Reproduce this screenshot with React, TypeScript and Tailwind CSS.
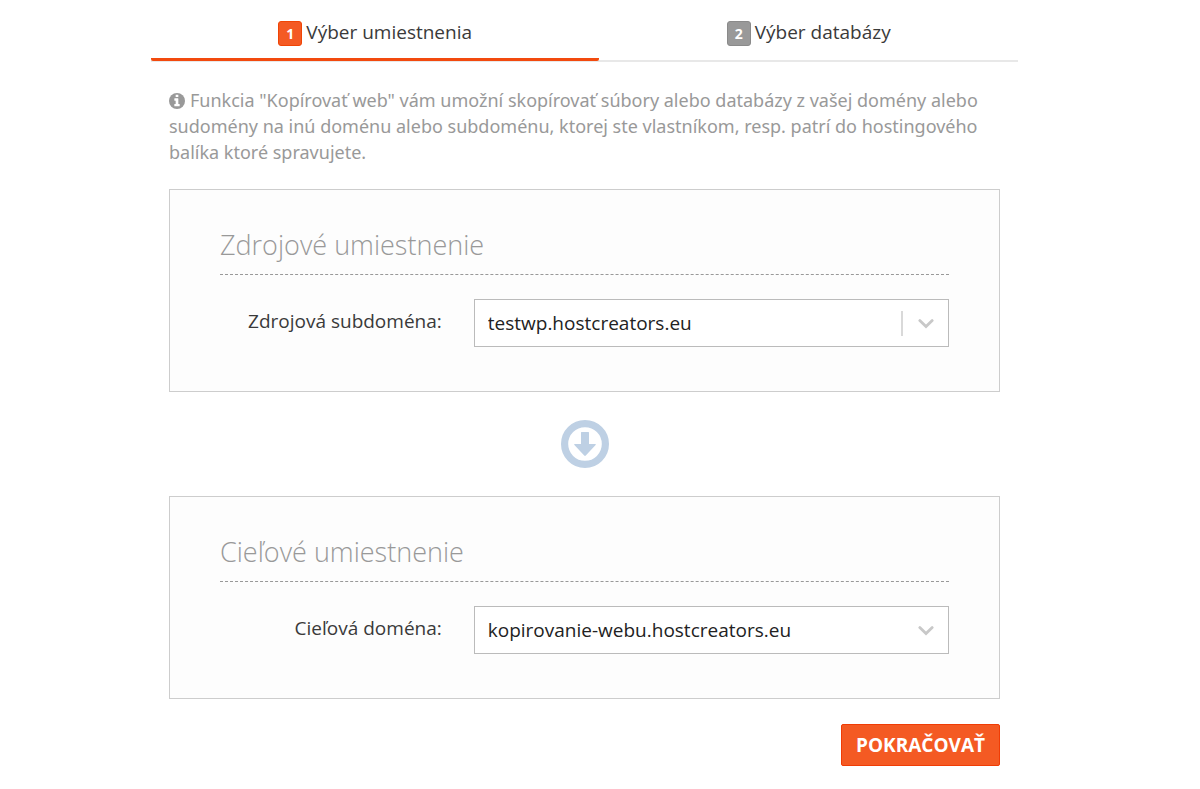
import type { ReactNode } from "react";
import clsx from "clsx";

const steps = [
  { number: 1, title: "Výber umiestnenia", active: true },
  { number: 2, title: "Výber databázy", active: false },
];

const StepTabs = () => (
  <nav className="flex border-b-2 border-[#e8e8e8]">
    {steps.map((step) => (
      <button
        key={step.number}
        type="button"
        aria-current={step.active ? "step" : undefined}
        className={clsx(
          "-mb-px flex flex-auto items-start justify-center gap-1 border-b-[3px] pt-[19px] pb-3 leading-[26px]",
          step.active ? "rounded-b-xs border-[#f24a0e]" : "border-transparent"
        )}
      >
        <span
          className={clsx(
            "mt-0.5 flex h-[25px] w-6 items-center justify-center rounded-[3px] border text-sm font-bold text-white",
            step.active ? "border-[#f04405] bg-[#f45a23]" : "border-[#8a8a8a] bg-[#999]"
          )}
        >
          {step.number}
        </span>
        {step.title}
      </button>
    ))}
  </nav>
);

const InfoIcon = () => (
  <svg viewBox="0 128 1536 1536" className="mr-[5px] inline size-4 align-[-2px]" aria-hidden="true">
    <circle cx="768" cy="896" r="768" fill="currentColor" />
    <path
      d="M1024 1376v-160q0-14-9-23t-23-9h-96v-512q0-14-9-23t-23-9h-320q-14 0-23 9t-9 23v160q0 14 9 23t23 9h96v320h-96q-14 0-23 9t-9 23v160q0 14 9 23t23 9h448q14 0 23-9t9-23zm-128-896v-160q0-14-9-23t-23-9h-192q-14 0-23 9t-9 23v160q0 14 9 23t23 9h192q14 0 23-9t9-23z"
      fill="#fff"
    />
  </svg>
);

const Panel = ({ title, children }: { title: string; children: ReactNode }) => (
  <section className="border border-[#cdcdcd] bg-[#fdfdfd] px-[50px] pt-[37px] pb-11">
    <h2 className="mb-6 border-b border-dashed border-[#999] pb-[11px] text-[27px] leading-9 font-light text-[#999]">
      {title}
    </h2>
    {children}
  </section>
);

type SelectFieldProps = {
  id: string;
  label: string;
  value: string;
  separator?: boolean;
};

const SelectField = ({ id, label, value, separator }: SelectFieldProps) => (
  <div className="grid grid-cols-[7fr_15fr] items-start gap-8">
    <label htmlFor={id} className="pt-[9px] text-right">
      {label}
    </label>
    <div className="relative">
      <select
        id={id}
        defaultValue={value}
        className="block h-12 w-full appearance-none border border-[#bbb] bg-white pr-14 pl-[13px] text-[#222]"
      >
        <option value={value}>{value}</option>
      </select>
      <span className="pointer-events-none absolute inset-y-0 right-0 flex items-center">
        {separator && <span className="h-[25px] w-0.5 bg-[#d9d9d9]" />}
        <svg viewBox="0 0 16 12" className="mx-[15px] h-3 w-4" fill="none" stroke="#c8c8c8" strokeWidth="2.8">
          <path d="M1.8 3.6 8 9.6l6.2-6" strokeLinecap="round" />
        </svg>
      </span>
    </div>
  </div>
);

export default function App() {
  return (
    <main className="bg-white pr-[31px] font-['Open_Sans',sans-serif] text-[19px] leading-[26px] text-[#3a3a3a]">
      <div className="mx-auto max-w-[867px]">
        <StepTabs />

        <div className="flex flex-col px-[18px] pt-[25px] pb-6">
          <p className="mb-6 font-['Noto_Sans',sans-serif] text-lg leading-[26px] text-[#999]">
            <InfoIcon />
            Funkcia "Kopírovať web" vám umožní skopírovať súbory alebo databázy z vašej domény alebo sudomény na inú
            doménu alebo subdoménu, ktorej ste vlastníkom, resp. patrí do hostingového balíka ktoré spravujete.
          </p>

          <Panel title="Zdrojové umiestnenie">
            <SelectField id="source" label="Zdrojová subdoména:" value="testwp.hostcreators.eu" separator />
          </Panel>

          <svg viewBox="0 0 48 48" className="my-7 size-12 self-center" aria-hidden="true">
            <circle cx="24" cy="24" r="20.4" fill="none" stroke="#bed0e4" strokeWidth="7.2" />
            <path
              d="M20.6 12h6.8q.6 0 .6.6V24h6.2q1.2.1.4 1.1L24.8 35.6q-.8.8-1.6 0L13.4 25.1q-.8-1 .4-1.1H20V12.6q0-.6.6-.6Z"
              fill="#bed0e4"
            />
          </svg>

          <Panel title="Cieľové umiestnenie">
            <SelectField id="target" label="Cieľová doména:" value="kopirovanie-webu.hostcreators.eu" />
          </Panel>

          <button
            type="button"
            className="mt-[25px] self-end rounded-xs border border-[#f03c05] bg-[#f45a23] px-[14px] py-2 leading-6 font-bold text-white"
          >
            POKRAČOVAŤ
          </button>
        </div>
      </div>
    </main>
  );
}
